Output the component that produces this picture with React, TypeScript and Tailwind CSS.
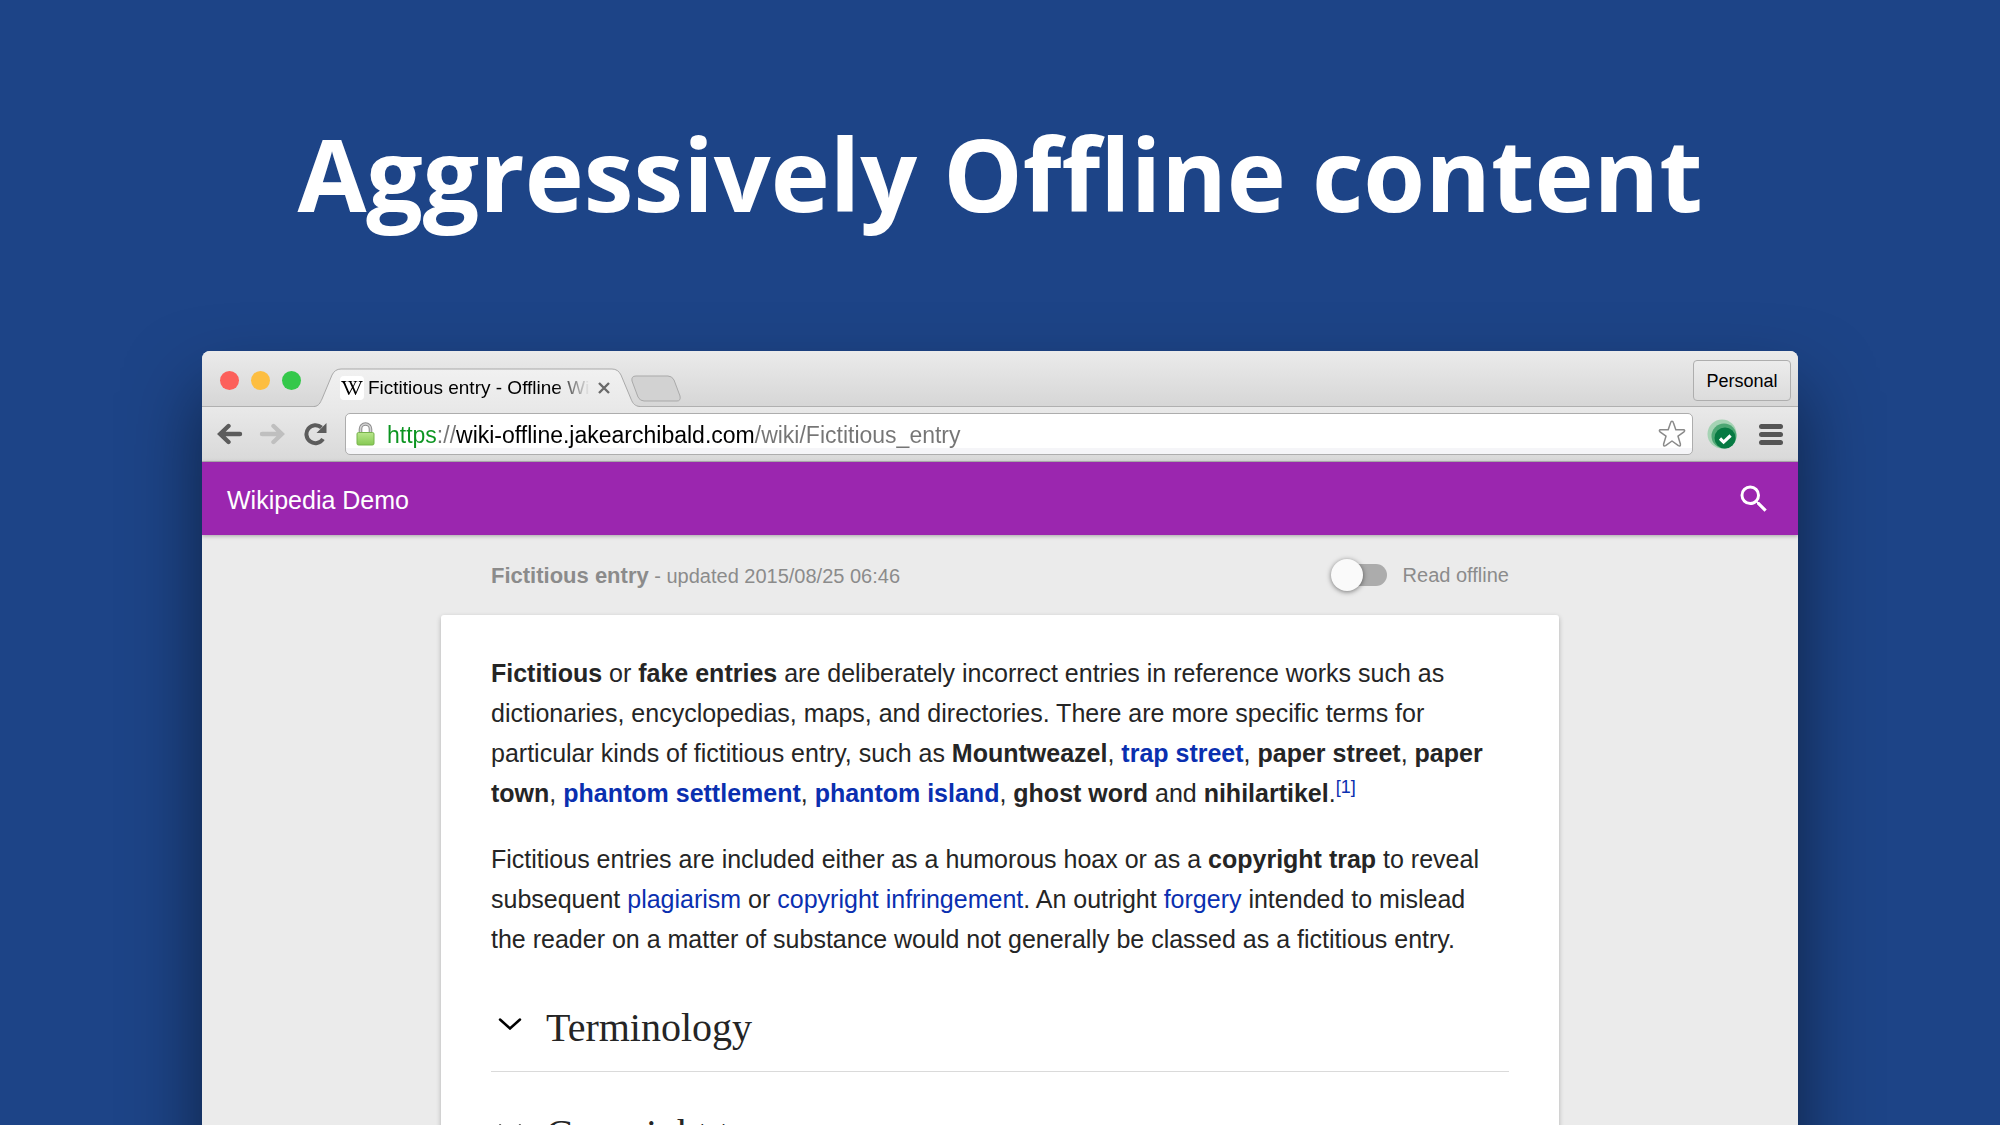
import type { ReactNode } from "react";
import { FaWikipediaW } from "react-icons/fa";
import { MdSearch } from "react-icons/md";

function WikiLink({ children, bold }: { children: ReactNode; bold?: boolean }) {
  return (
    <a href="#article" className={bold ? "font-bold text-[#0a2fb0]" : "text-[#0a2fb0]"}>
      {children}
    </a>
  );
}

function TabStrip() {
  return (
    <div className="flex h-[56px] items-end bg-linear-to-b from-[#ebebeb] to-[#d6d6d6] shadow-[inset_0_-1px_0_#b0b0b0]">
      <div className="flex items-center gap-3 self-center pl-[18px] pt-[2px]">
        <button aria-label="Close window" className="size-[19px] rounded-full bg-[#fc605b]" />
        <button aria-label="Minimise window" className="size-[19px] rounded-full bg-[#fdbe41]" />
        <button aria-label="Zoom window" className="size-[19px] rounded-full bg-[#34c84a]" />
      </div>
      <div className="relative ml-[13px] flex h-[39px] w-[326px] items-center pl-[26px] pr-[22px]">
        <svg className="absolute inset-0 size-full" viewBox="0 0 326 39" preserveAspectRatio="none" aria-hidden="true">
          <defs>
            <linearGradient id="tab" x1="0" y1="0" x2="0" y2="1">
              <stop offset="0" stopColor="#f1f1f1" />
              <stop offset="1" stopColor="#e9e9e9" />
            </linearGradient>
          </defs>
          <path
            d="M0 39 C5 38 6 35 8 31 L18 7 Q21 1 27 1 H298 Q304 1 307 7 L317 31 C319 36 321 38 326 39Z"
            fill="url(#tab)"
          />
          <path
            d="M0 38.5 C5 38 6 35 8 31 L18 7 Q21 1 27 1 H298 Q304 1 307 7 L317 31 C319 36 321 38 326 38.5"
            fill="none"
            stroke="#a9a9a9"
          />
        </svg>
        <span className="relative flex size-6 shrink-0 items-center justify-center rounded bg-white">
          <FaWikipediaW className="size-[22px] text-black" />
        </span>
        <span className="relative ml-1 flex-1 overflow-hidden whitespace-nowrap text-[19px] leading-6 text-black [mask-image:linear-gradient(to_right,black_84%,transparent)]">
          Fictitious entry - Offline Wiki
        </span>
        <button aria-label="Close tab" className="relative ml-2 mr-2 shrink-0 text-[#6a6a6a]">
          <svg className="size-3" viewBox="0 0 12 12" fill="none" stroke="currentColor" strokeWidth="2.4" aria-hidden="true">
            <path d="M1 1l10 10M11 1L1 11" />
          </svg>
        </button>
      </div>
      <button aria-label="New tab" className="mb-[5px] ml-[-10px]">
        <svg className="h-[27px] w-[52px]" viewBox="0 0 52 27" aria-hidden="true">
          <path
            d="M6 1H38Q42 1 44 5L50 21Q51 26 47 26H14Q10 26 8 22L2 6Q1 1 6 1Z"
            fill="#d2d2d2"
            stroke="#a9a9a9"
          />
        </svg>
      </button>
      <button className="mb-[6px] ml-auto mr-[7px] h-[41px] w-[98px] rounded border border-[#aeaeae] bg-linear-to-b from-[#ececec] to-[#dcdcdc] pt-[2px] text-[18px] text-black">
        Personal
      </button>
    </div>
  );
}

function Toolbar() {
  return (
    <div className="flex h-[55px] items-center border-b border-[#b3b3b3] bg-linear-to-b from-[#e9e9e9] to-[#d9d9d9] pl-[15px] pr-[15px]">
      <button aria-label="Back" className="text-[#5c5c5c]">
        <svg className="h-[22px] w-[26px]" viewBox="0 0 26 22" fill="none" stroke="currentColor" strokeWidth="4.4" strokeLinecap="round" aria-hidden="true">
          <path d="M23 11H4M11.500 3L3.200 11L11.500 19" />
        </svg>
      </button>
      <button aria-label="Forward" className="ml-4 text-[#bfbfbf]">
        <svg className="h-[22px] w-[26px]" viewBox="0 0 26 22" fill="none" stroke="currentColor" strokeWidth="4.4" strokeLinecap="round" aria-hidden="true">
          <path d="M3 11H22M14.500 3L22.800 11L14.500 19" />
        </svg>
      </button>
      <button aria-label="Reload" className="ml-[19px] text-[#5c5c5c]">
        <svg className="size-6" viewBox="0 0 24 24" aria-hidden="true">
          <path d="M19 17A9 9 0 1 1 17.500 5.500" fill="none" stroke="currentColor" strokeWidth="4" />
          <path d="M22.500 1V11H12.500Z" fill="currentColor" />
        </svg>
      </button>
      <div className="ml-[17px] flex h-[42px] flex-1 items-center rounded-[5px] border border-[#adadad] bg-linear-to-b from-white from-85% to-[#f5f5f8] to-85% pl-[10px] pr-[6px]">
        <svg className="h-6 w-[19px] shrink-0" viewBox="0 0 19 24" aria-hidden="true">
          <defs>
            <linearGradient id="lock" x1="0" y1="0" x2="0" y2="1">
              <stop offset="0" stopColor="#b9e68c" />
              <stop offset="1" stopColor="#86c953" />
            </linearGradient>
          </defs>
          <path d="M4.500 12V7a5 5 0 0 1 10 0V12" fill="none" stroke="#8c8c8c" strokeWidth="3.600" />
          <path d="M4.500 12V7a5 5 0 0 1 10 0V12" fill="none" stroke="#d2d2d2" strokeWidth="1.600" />
          <rect x="1" y="10.500" width="17" height="12.500" rx="1.500" fill="url(#lock)" stroke="#77b34c" />
        </svg>
        <input
          aria-label="Address"
          type="text"
          defaultValue="https://wiki-offline.jakearchibald.com/wiki/Fictitious_entry"
          className="ml-3 min-w-0 flex-1 bg-[linear-gradient(to_right,#0b9420_50px,#757575_50px,#757575_69px,#000_69px,#000_368px,#757575_368px)] bg-clip-text pt-[2px] text-[23px] leading-8 text-transparent outline-none"
        />
        <button aria-label="Bookmark this page" className="text-[#8a8a8a]">
          <svg className="size-7" viewBox="0 0 28 28" fill="white" stroke="currentColor" strokeWidth="1.500" strokeLinejoin="round" aria-hidden="true">
            <path d="M14 1.200Q15 1.200 15.500 3L17.800 9.800H25.500Q27.500 10 26 11.800L20 16.200L22.400 24Q22.700 26.800 20.400 25.600L14 21L7.600 25.600Q5.300 26.800 5.600 24L8 16.200L2 11.800Q.5 10 2.500 9.800H10.200L12.500 3Q13 1.200 14 1.200Z" />
          </svg>
        </button>
      </div>
      <button aria-label="Offline status extension" className="ml-[14px]">
        <svg className="size-[30px]" viewBox="0 0 30 30" aria-hidden="true">
          <circle cx="15" cy="15" r="14.500" fill="#a5d3b4" />
          <circle cx="17" cy="17" r="12.500" fill="#4da774" />
          <circle cx="18" cy="19" r="10.500" fill="#077a43" />
          <path d="M13 19.500l3.600 3.600 7-6.600" fill="none" stroke="white" strokeWidth="3.200" />
        </svg>
      </button>
      <button aria-label="Menu" className="ml-[22px] flex w-6 flex-col gap-[3px]">
        <span className="h-[5px] w-full rounded-full bg-[#555]" />
        <span className="h-[5px] w-full rounded-full bg-[#555]" />
        <span className="h-[5px] w-full rounded-full bg-[#555]" />
      </button>
    </div>
  );
}

function Section({ title }: { title: string }) {
  return (
    <h2 className="border-b border-[#dadada] font-['Liberation_Serif',serif] text-[40px] leading-[48px]">
      <button className="flex w-full items-center pb-[19px] pl-[7px] pt-[38px] text-left">
        <svg className="mb-2 mr-6 h-3 w-6" viewBox="0 0 24 12" fill="none" stroke="black" strokeWidth="2.500" strokeLinecap="round" aria-hidden="true">
          <path d="M2 1.500L12 10.500L22 1.500" />
        </svg>
        {title}
      </button>
    </h2>
  );
}

function Article() {
  return (
    <main className="mx-auto max-w-[1118px]">
      <div className="flex h-[80px] items-center justify-between px-[50px] text-[20px] text-[#8b8b8b]">
        <p>
          <b className="text-[22px]">Fictitious entry</b> - updated 2015/08/25 06:46
        </p>
        <label className="flex items-center gap-4">
          <span className="relative flex h-8 w-14 items-center">
            <input type="checkbox" role="switch" className="peer absolute inset-0 z-10 size-full opacity-0" />
            <span className="ml-4 h-[22px] w-10 rounded-full bg-[#acacac]" />
            <span className="absolute left-0 size-8 rounded-full bg-[#fafafa] shadow-[0_1px_5px_rgba(0,0,0,0.5)] peer-checked:left-6" />
          </span>
          Read offline
        </label>
      </div>
      <article
        id="article"
        className="rounded-[3px] bg-white px-[50px] pb-12 pt-[38px] text-[25px] leading-[40px] text-[#252525] shadow-[0_2px_5px_rgba(0,0,0,0.25)]"
      >
        <p className="pr-4">
          <b>Fictitious</b> or <b>fake entries</b> are deliberately incorrect entries in reference works such as
          dictionaries, encyclopedias, maps, and directories. There are more specific terms for particular kinds of
          fictitious entry, such as <b>Mountweazel</b>, <WikiLink bold>trap street</WikiLink>, <b>paper street</b>,{" "}
          <b>paper town</b>, <WikiLink bold>phantom settlement</WikiLink>, <WikiLink bold>phantom island</WikiLink>,{" "}
          <b>ghost word</b> and <b>nihilartikel</b>.
          <sup className="text-[18px]">
            <WikiLink>[1]</WikiLink>
          </sup>
        </p>
        <p className="mb-[7px] mt-[26px] pr-4">
          Fictitious entries are included either as a humorous hoax or as a <b>copyright trap</b> to reveal subsequent{" "}
          <WikiLink>plagiarism</WikiLink> or <WikiLink>copyright infringement</WikiLink>. An outright{" "}
          <WikiLink>forgery</WikiLink> intended to mislead the reader on a matter of substance would not generally be
          classed as a fictitious entry.
        </p>
        <Section title="Terminology" />
        <Section title="Copyright traps" />
      </article>
    </main>
  );
}

export default function App() {
  return (
    <div className="h-screen overflow-hidden bg-[#1d4487] px-[202px] font-['Liberation_Sans',Arial,sans-serif]">
      <h1 className="pb-[108px] pt-[103px] text-center font-['Open_Sans',sans-serif] text-[100px] font-bold leading-[140px] text-white">
        Aggressively Offline content
      </h1>
      <div className="min-h-screen overflow-hidden rounded-t-lg bg-[#ebebeb] shadow-[0_40px_75px_rgba(0,0,0,0.5)]">
        <TabStrip />
        <Toolbar />
        <header className="relative flex h-[73px] items-center justify-between bg-[#9b26af] pl-[25px] pr-[26px] text-white shadow-[0_1px_4px_rgba(0,0,0,0.3)]">
          <span className="pt-1 text-[25px]">Wikipedia Demo</span>
          <button aria-label="Search">
            <MdSearch className="size-9" />
          </button>
        </header>
        <Article />
      </div>
    </div>
  );
}
